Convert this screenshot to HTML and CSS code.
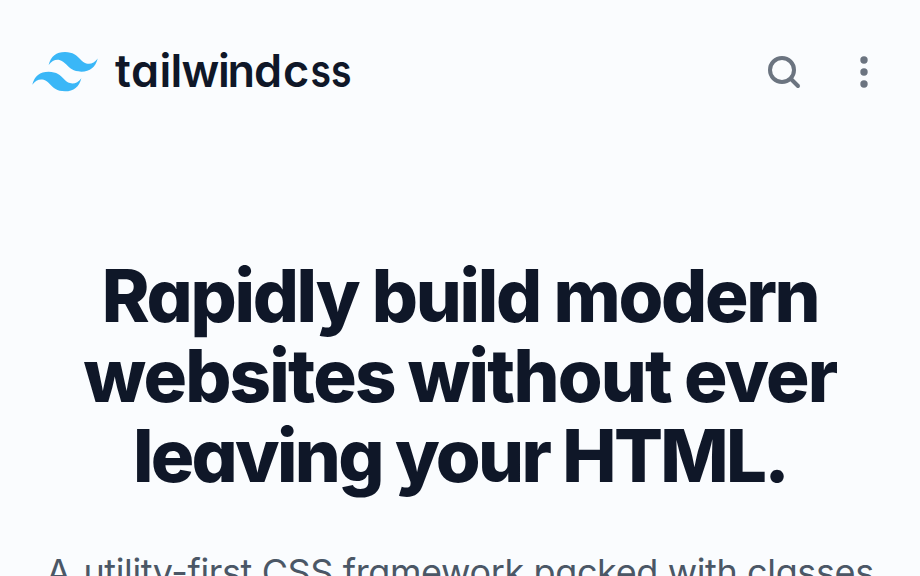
FILE: index.html
```html
<!DOCTYPE html>
<html lang="en">
<head>
<meta charset="utf-8">
<title>Tailwind CSS</title>
<link rel="stylesheet" href="styles.css">
</head>
<body>
<header class="header">
  <a class="brand">
    <svg class="mark" viewBox="0 0 54 33"><path fill="#3ab7f7" fill-rule="evenodd" clip-rule="evenodd" d="M27 0c-7.2 0-11.7 3.6-13.5 10.8 2.7-3.6 5.85-4.95 9.45-4.05 2.054.513 3.522 2.004 5.147 3.653C30.744 13.09 33.808 16.2 40.5 16.2c7.2 0 11.7-3.6 13.5-10.8-2.7 3.6-5.85 4.95-9.45 4.05-2.054-.513-3.522-2.004-5.147-3.653C36.756 3.11 33.692 0 27 0zM13.5 16.2C6.3 16.2 1.8 19.8 0 27c2.7-3.6 5.85-4.95 9.45-4.05 2.054.514 3.522 2.004 5.147 3.653C17.244 29.29 20.308 32.4 27 32.4c7.2 0 11.7-3.6 13.5-10.8-2.7 3.6-5.85 4.95-9.45 4.05-2.054-.513-3.522-2.004-5.147-3.653C23.256 19.31 20.192 16.2 13.5 16.2z"/></svg>
    <svg class="wordmark" viewBox="0 0 240 56"><text y="43" x="-1 15 43.5 54.5 65.5 102 111.5 138 167">tailwindc</text><text y="43" x="194.5" textLength="41" lengthAdjust="spacingAndGlyphs">ss</text></svg>
  </a>
  <nav class="actions">
    <svg class="search" viewBox="0 0 24 24"><path d="m19 19-3.5-3.5"/><circle cx="11" cy="11" r="6"/></svg>
    <svg class="more" viewBox="0 0 8 32"><circle cx="4" cy="4" r="3.7"/><circle cx="4" cy="16" r="3.7"/><circle cx="4" cy="28" r="3.7"/></svg>
  </nav>
</header>
<main class="hero">
  <h1><span>Rapidly build modern</span><span class="middle">websites without ever</span><span class="last">leaving your HTML.</span></h1>
  <p><span class="lead">A</span> utility-first CSS framework packed with classes</p>
</main>
</body>
</html>
```

FILE: styles.css
```css
* { box-sizing: border-box; }
html, body { margin: 0; height: 576px; overflow: hidden; }
body { background: #fafcfe; font-family: Inter, sans-serif; color: #0f1728; font-feature-settings: "cv11"; }
.header { display: flex; justify-content: space-between; align-items: center; height: 144px; padding: 0 52px 0 32px; }
.brand { display: flex; align-items: center; gap: 18px; }
.mark { width: 66px; height: 40px; }
.wordmark { width: 240px; height: 56px; overflow: visible; }
.wordmark text { font-size: 45px; font-weight: 600; fill: #0f1728; }
.actions { display: flex; align-items: center; gap: 52px; }
.search { width: 48px; height: 48px; fill: none; stroke: #6b7480; stroke-width: 2; stroke-linecap: round; }
.more { width: 8px; height: 32px; fill: #6b7480; }
.hero { height: 432px; padding-top: 112px; text-align: center; overflow: hidden; }
h1 { margin: 0; font-size: 72.5px; line-height: 80px; font-weight: 840; letter-spacing: -2.3px; }
h1 span { display: block; white-space: nowrap; }
h1 .middle { letter-spacing: -1.8px; word-spacing: -1px; }
h1 .last { letter-spacing: -2.7px; }
p { margin: 46px 0 0; font-size: 36px; line-height: 60px; letter-spacing: -.38px; color: #4b5766; white-space: nowrap; }
.lead { margin-right: 3px; }
```
